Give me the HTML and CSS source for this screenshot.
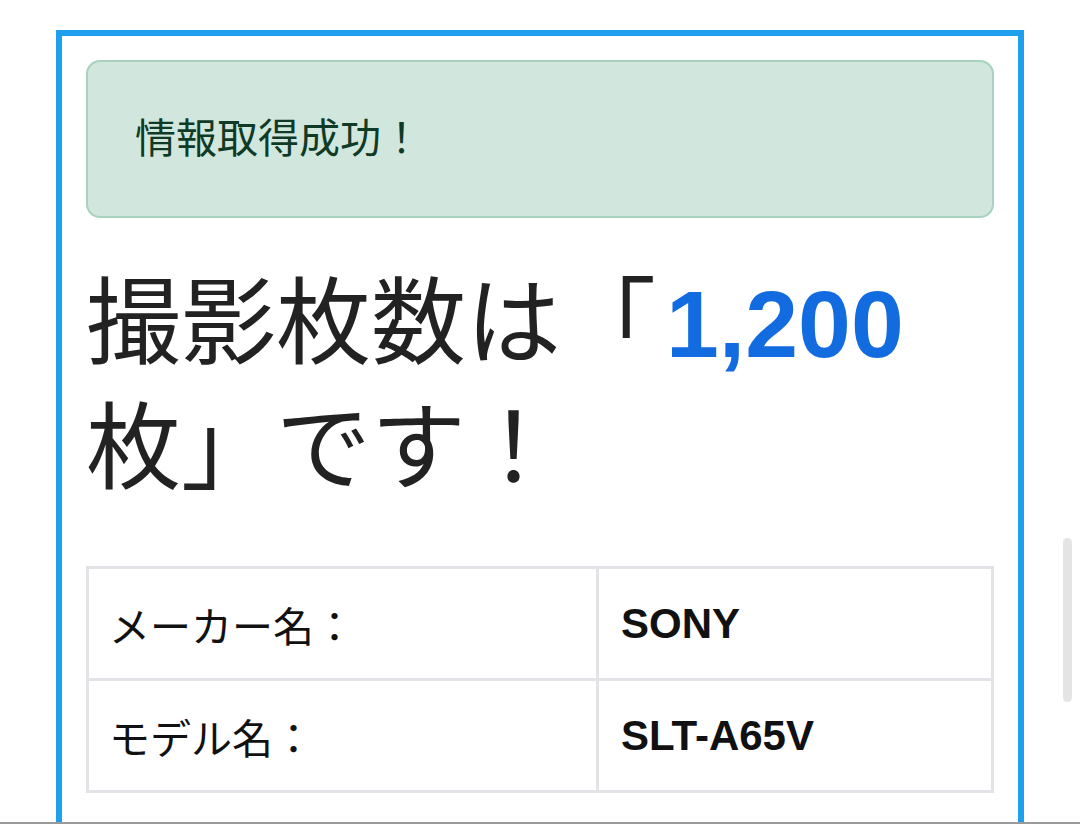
FILE: index.html
```html
<!DOCTYPE html>
<html lang="ja">
<head>
    <meta charset="UTF-8">
    <meta name="viewport" content="width=device-width, initial-scale=1.0">
    <title>撮影枚数チェック</title>
    <link rel="stylesheet" href="styles.css">
</head>
<body>
    <div class="frame">
        <div class="alert">情報取得成功！</div>

        <h1 class="result">撮影枚数は「<strong>1,200</strong>枚」です！</h1>

        <!-- Camera info -->
        <table class="info">
            <tr>
                <td class="label">メーカー名：</td>
                <td class="value">SONY</td>
            </tr>
            <tr>
                <td class="label">モデル名：</td>
                <td class="value">SLT-A65V</td>
            </tr>
        </table>
    </div>

    <div class="scrollbar"></div>
    <div class="bottom-edge"></div>
</body>
</html>
```

FILE: styles.css
```css
body {
    margin: 0;
    background-color: #ffffff;
    color: #212529;
    font-family: "Liberation Sans", "Noto Sans CJK JP", sans-serif;
    overflow: hidden;
}
.frame {
    margin: 30px 0 0 56px;
    width: 908px;
    min-height: 900px;
    border: 6px solid #1ea0ee;
    padding: 24px;
}
.alert {
    background-color: #d1e7dd;
    border: 2px solid #a8d2bf;
    border-radius: 14px;
    color: #0f3b26;
    font-size: 41px;
    line-height: 62px;
    height: 158px;
    display: flex;
    align-items: center;
    padding: 0 0 0 47px;
    box-sizing: border-box;
}
.result {
    margin: 44px 0 0 0;
    font-size: 95px;
    font-weight: 400;
    line-height: 125px;
    color: #222222;
}
.result strong {
    color: #136be0;
    font-weight: 700;
    margin-left: 10px;
}
.info {
    margin-top: 54px;
    width: 100%;
    border-collapse: collapse;
    border: 3px solid #e2e3e7;
    font-size: 41px;
    color: #111111;
}
.info td {
    border: 3px solid #e2e3e7;
    height: 112px;
    padding: 0 22px;
    vertical-align: middle;
    box-sizing: border-box;
}
.info .label {
    width: 510px;
    padding-left: 20px;
}
.info .value {
    font-weight: 700;
    font-size: 42px;
}
.scrollbar {
    position: fixed;
    top: 538px;
    right: 8px;
    width: 9px;
    height: 164px;
    border-radius: 5px;
    background-color: #e4e4e4;
}
.bottom-edge {
    position: fixed;
    left: 0;
    right: 0;
    bottom: 0;
    height: 2px;
    background-color: #9a9a9a;
}
```
